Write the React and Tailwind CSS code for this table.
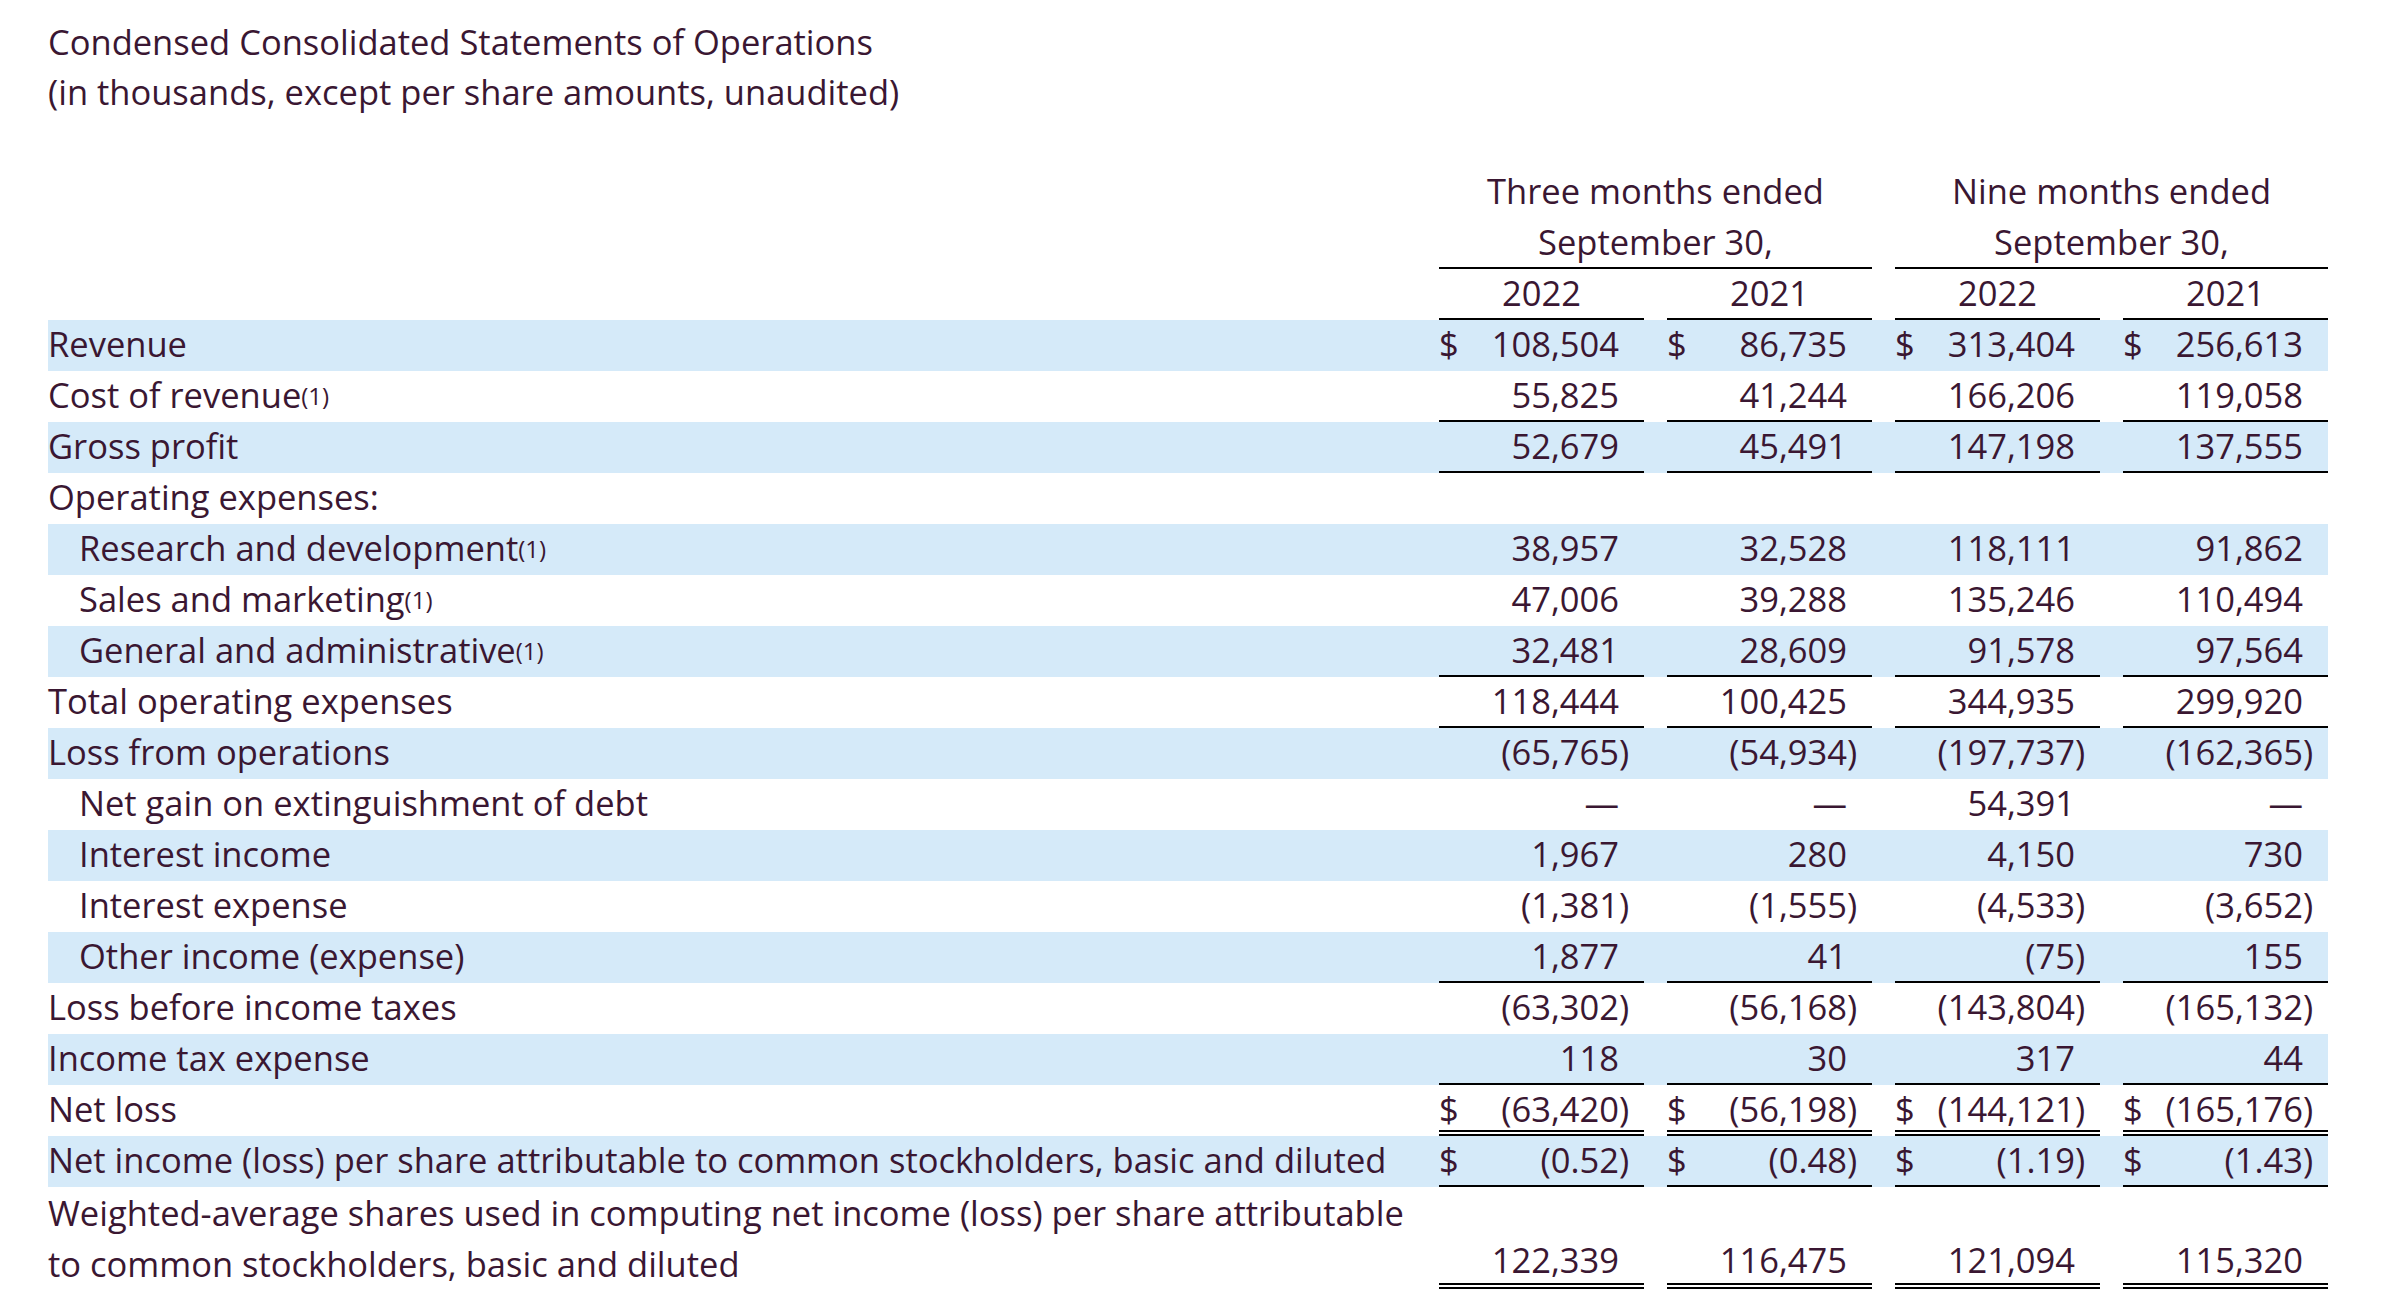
import React from 'react'
import clsx from 'clsx'

const rows = [
  { label: 'Revenue', band: true, cur: true, vals: ['108,504', '86,735', '313,404', '256,613'] },
  { label: 'Cost of revenue', note: true, line: 'single', vals: ['55,825', '41,244', '166,206', '119,058'] },
  { label: 'Gross profit', band: true, line: 'single', vals: ['52,679', '45,491', '147,198', '137,555'] },
  { label: 'Operating expenses:', vals: null },
  { label: 'Research and development', indent: true, note: true, band: true, vals: ['38,957', '32,528', '118,111', '91,862'] },
  { label: 'Sales and marketing', indent: true, note: true, vals: ['47,006', '39,288', '135,246', '110,494'] },
  { label: 'General and administrative', indent: true, note: true, band: true, line: 'single', vals: ['32,481', '28,609', '91,578', '97,564'] },
  { label: 'Total operating expenses', line: 'single', vals: ['118,444', '100,425', '344,935', '299,920'] },
  { label: 'Loss from operations', band: true, vals: ['(65,765)', '(54,934)', '(197,737)', '(162,365)'] },
  { label: 'Net gain on extinguishment of debt', indent: true, vals: ['—', '—', '54,391', '—'] },
  { label: 'Interest income', indent: true, band: true, vals: ['1,967', '280', '4,150', '730'] },
  { label: 'Interest expense', indent: true, vals: ['(1,381)', '(1,555)', '(4,533)', '(3,652)'] },
  { label: 'Other income (expense)', indent: true, band: true, line: 'single', vals: ['1,877', '41', '(75)', '155'] },
  { label: 'Loss before income taxes', vals: ['(63,302)', '(56,168)', '(143,804)', '(165,132)'] },
  { label: 'Income tax expense', band: true, line: 'single', vals: ['118', '30', '317', '44'] },
  { label: 'Net loss', cur: true, line: 'double', vals: ['(63,420)', '(56,198)', '(144,121)', '(165,176)'] },
  {
    label: 'Net income (loss) per share attributable to common stockholders, basic and diluted',
    band: true,
    cur: true,
    line: 'single',
    vals: ['(0.52)', '(0.48)', '(1.19)', '(1.43)'],
  },
]

// One numeric cell: "$" on the left, figure on the right, closing paren hangs out
const Amount = ({ value, cur, line, tall }) => {
  const neg = value.endsWith(')')
  const body = neg ? value.slice(0, -1) : value
  return (
    <div
      className={clsx(
        'flex w-[205px] justify-between',
        tall ? 'h-[102px] items-end' : 'h-[51px] items-start',
        line === 'single' && 'border-b-2 border-black',
        line === 'double' && 'border-b-[6px] border-double border-black'
      )}
    >
      <span>{cur ? '$' : ''}</span>
      <span className="flex pr-[13px]">
        <span>{body}</span>
        <span className="w-[12px]">{neg ? ')' : ''}</span>
      </span>
    </div>
  )
}

const Note = () => <span className="text-[24px] align-[3px]">(1)</span>

const Row = ({ row }) => (
  <div className={clsx('flex w-fit', row.band && 'bg-[#d5eaf9]')}>
    <div className={clsx('h-[51px] w-[1391px] whitespace-nowrap', row.indent && 'pl-[31px]')}>
      {row.label}
      {row.note && <Note />}
    </div>
    <div className="flex gap-[23px]">
      {row.vals
        ? row.vals.map((v, i) => <Amount key={i} value={v} cur={row.cur} line={row.line} />)
        : <div className="w-[889px]" />}
    </div>
  </div>
)

const App = () => {
  const years = ['2022', '2021', '2022', '2021']
  const weighted = ['122,339', '116,475', '121,094', '115,320']

  return (
    <div className="min-h-screen bg-white pl-[48px] pt-[17px] font-['Open_Sans',sans-serif] text-[34.5px] font-medium leading-[47px] text-[#3a1732]">
      {/* Title */}
      <div className="leading-[50px]">
        <div>Condensed Consolidated Statements of Operations</div>
        <div>(in thousands, except per share amounts, unaudited)</div>
      </div>

      {/* Column headers */}
      <div className="mt-[50px] flex">
        <div className="w-[1391px]" />
        <div className="flex gap-[23px]">
          {['Three months ended', 'Nine months ended'].map((t) => (
            <div key={t} className="w-[433px] text-center">
              <div className="h-[51px]">{t}</div>
              <div className="h-[51px] border-b-2 border-black">September 30,</div>
            </div>
          ))}
        </div>
      </div>
      <div className="flex">
        <div className="w-[1391px]" />
        <div className="flex gap-[23px]">
          {years.map((y, i) => (
            <div key={i} className="h-[51px] w-[205px] border-b-2 border-black text-center">
              {y}
            </div>
          ))}
        </div>
      </div>

      {/* Body */}
      {rows.map((r) => (
        <Row key={r.label} row={r} />
      ))}

      <div className="flex w-fit">
        <div className="h-[102px] w-[1391px] leading-[51px]">
          Weighted-average shares used in computing net income (loss) per share attributable
          <br />
          to common stockholders, basic and diluted
        </div>
        <div className="flex gap-[23px]">
          {weighted.map((v, i) => (
            <Amount key={i} value={v} line="double" tall />
          ))}
        </div>
      </div>
    </div>
  )
}

export default App
